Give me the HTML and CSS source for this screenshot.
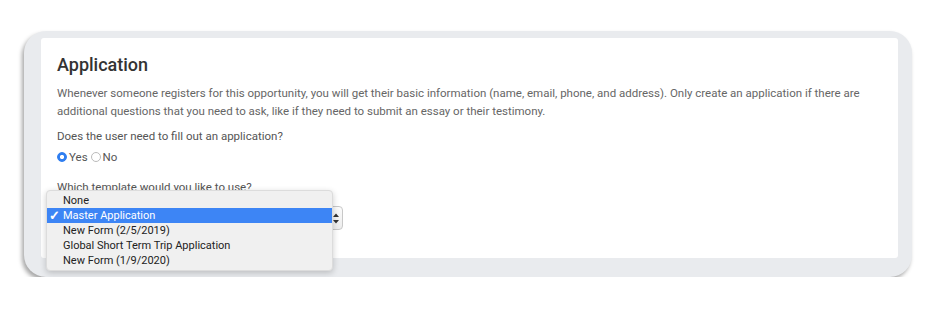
FILE: index.html
```html
<!DOCTYPE html>
<html lang="en">
<head>
    <meta charset="UTF-8">
    <title>Application</title>
    <link rel="stylesheet" href="styles.css">
</head>
<body>
    <div class="frame">
        <div class="card">
            <h2>Application</h2>
            <p class="intro">Whenever someone registers for this opportunity, you will get their basic information (name, email, phone, and address). Only create an application if there are additional questions that you need to ask, like if they need to submit an essay or their testimony.</p>

            <p class="question">Does the user need to fill out an application?</p>
            <div class="radios">
                <span class="radio checked"></span><span class="radio-label">Yes</span>
                <span class="radio"></span><span class="radio-label">No</span>
            </div>

            <p class="question template-label">Which template would you like to use?</p>
            <div class="select-wrap">
                <div class="select">
                    <span class="arrows">
                        <svg width="6" height="11" viewBox="0 0 6 11"><path d="M0 4 L3 0.5 L6 4 Z M0 7 L3 10.5 L6 7 Z" fill="#333"/></svg>
                    </span>
                </div>
                <ul class="menu">
                    <li>None</li>
                    <li class="selected"><span class="check">&#10003;</span>Master Application</li>
                    <li>New Form (2/5/2019)</li>
                    <li>Global Short Term Trip Application</li>
                    <li>New Form (1/9/2020)</li>
                </ul>
            </div>
        </div>
    </div>
</body>
</html>
```

FILE: styles.css
```css
* {
    box-sizing: border-box;
}

body {
    margin: 0;
    padding: 0;
    background-color: #fff;
    font-family: Roboto, "Liberation Sans", sans-serif;
}

.frame {
    width: 888px;
    height: 246px;
    margin: 31px 0 0 24px;
    padding: 7px 14px 0 17px;
    background-color: #e9ebee;
    border-radius: 22px;
    box-shadow: -2px 3px 4px rgba(0, 0, 0, 0.35);
}

.card {
    height: 220px;
    padding: 0 16px;
    background-color: #fff;
    border-radius: 3px;
}

h2 {
    margin: 0;
    padding-top: 15px;
    font-size: 18px;
    font-weight: 500;
    line-height: 24px;
    color: #333;
}

.intro {
    margin: 7px 0 0 0;
    font-size: 11.5px;
    line-height: 18px;
    color: #666;
}

.question {
    margin: 7px 0 0 0;
    font-size: 11.5px;
    line-height: 18px;
    color: #555;
}

.radios {
    display: flex;
    align-items: center;
    margin-top: 5px;
    height: 14px;
    font-size: 11.5px;
    color: #555;
}

.radio {
    width: 10px;
    height: 10px;
    border: 1px solid #bbb;
    border-radius: 50%;
    background: #fff;
    margin-right: 2px;
}

.radio.checked {
    border-color: #2f7ef0;
    background: radial-gradient(circle, #fff 0 1.8px, #2f7ef0 2.4px);
}

.radio-label {
    margin-right: 3px;
}

.template-label {
    margin-top: 14px;
}

.select-wrap {
    position: relative;
    margin-top: 10px;
}

.select {
    width: 286px;
    height: 24px;
    border: 1px solid #c8c8c8;
    border-radius: 4px;
    background: linear-gradient(#fbfbfb, #ececec);
    display: flex;
    justify-content: flex-end;
    align-items: center;
}

.arrows {
    display: flex;
    padding-right: 3px;
}

.menu {
    position: absolute;
    left: -11px;
    top: -16px;
    width: 287px;
    margin: 0;
    padding: 2px 0;
    list-style: none;
    background-color: #f0f0f0;
    border: 1px solid #dcdcdc;
    border-radius: 4px;
    box-shadow: 0 2px 6px rgba(0, 0, 0, 0.2);
    font-family: Roboto, "Liberation Sans", sans-serif;
    font-size: 11px;
    color: #222;
}

.menu li {
    height: 15px;
    line-height: 15px;
    padding-left: 16px;
    position: relative;
}

.menu li.selected {
    background-color: #3d85f5;
    color: #fff;
}

.check {
    position: absolute;
    left: 2px;
    font-size: 13px;
    font-weight: bold;
}
```
